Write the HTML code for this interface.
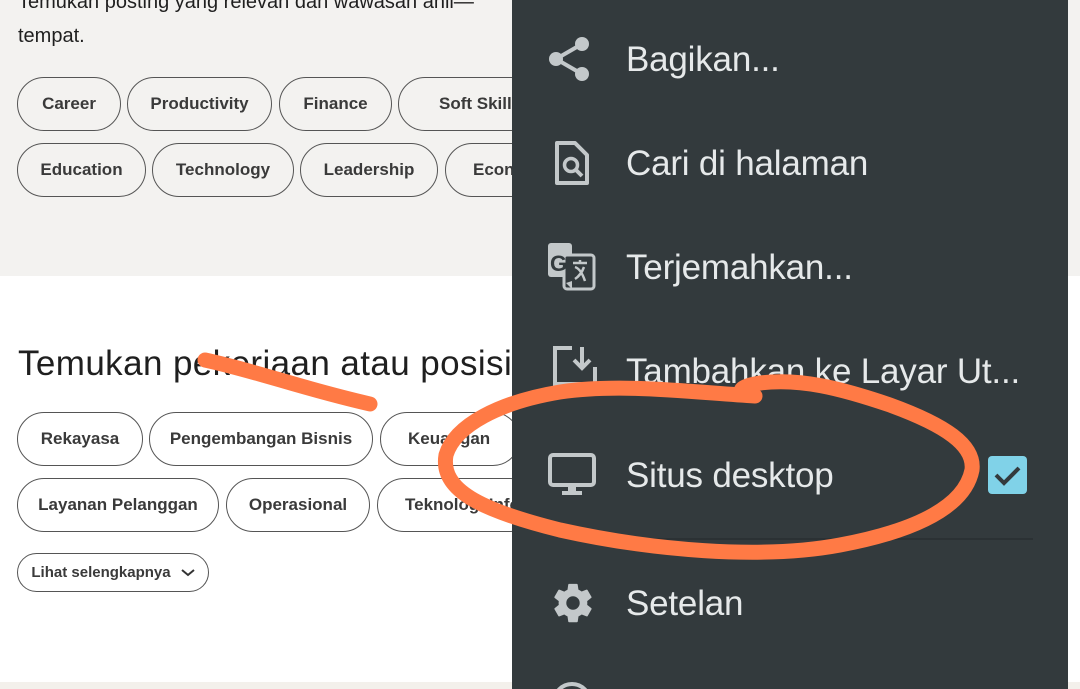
<!DOCTYPE html>
<html style="overflow:hidden;width:1080px;height:689px"><head><meta charset="utf-8"><style>
*{margin:0;padding:0;box-sizing:border-box}
body{width:1080px;height:689px;overflow:hidden;position:relative;background:#fff;font-family:"Liberation Sans",sans-serif}
.top{position:absolute;left:0;top:0;width:1080px;height:276px;background:#f3f2f0}
.bot{position:absolute;left:0;top:682px;width:1080px;height:7px;background:#f3f0eb}
.t{position:absolute;color:#1f1f1f;white-space:nowrap}
.chip{position:absolute;height:54px;border:1.3px solid #555;border-radius:27px;font-size:17px;font-weight:bold;color:#3a3a3a;display:flex;align-items:center;justify-content:center;white-space:nowrap;background:transparent;overflow:hidden}
.menu{position:absolute;left:512px;top:0;width:556px;height:689px;background:#333a3d;overflow:hidden}
.mi{position:absolute;left:114px;font-size:35px;color:#e6e9ea;white-space:nowrap;letter-spacing:-0.2px}
.ic{position:absolute;left:36px}
</style></head><body>
<div class="top"></div>
<div class="bot"></div>
<div class="t" style="left:18px;top:-9px;font-size:20px">Temukan posting yang relevan dan wawasan ahli—</div>
<div class="t" style="left:18px;top:25px;font-size:20px">tempat.</div>
<div class="chip" style="left:17px;top:77px;width:104px">Career</div>
<div class="chip" style="left:127px;top:77px;width:145px">Productivity</div>
<div class="chip" style="left:279px;top:77px;width:113px">Finance</div>
<div class="chip" style="left:398px;top:77px;width:140px;justify-content:flex-start;padding-left:40px">Soft Skills</div>
<div class="chip" style="left:17px;top:143px;width:129px">Education</div>
<div class="chip" style="left:152px;top:143px;width:142px">Technology</div>
<div class="chip" style="left:300px;top:143px;width:138px">Leadership</div>
<div class="chip" style="left:445px;top:143px;width:100px;justify-content:flex-start;padding-left:27px">Economy</div>
<div class="t" style="left:18px;top:344px;font-size:35px;letter-spacing:0.4px">Temukan pekerjaan atau posisi</div>
<div class="chip" style="left:17px;top:412px;width:126px">Rekayasa</div>
<div class="chip" style="left:149px;top:412px;width:224px">Pengembangan Bisnis</div>
<div class="chip" style="left:380px;top:412px;width:140px;justify-content:flex-start;padding-left:27px">Keuangan</div>
<div class="chip" style="left:17px;top:478px;width:202px">Layanan Pelanggan</div>
<div class="chip" style="left:226px;top:478px;width:144px">Operasional</div>
<div class="chip" style="left:377px;top:478px;width:160px;justify-content:flex-start;padding-left:27px">Teknologi Informasi</div>
<div class="chip" style="left:17px;top:553px;width:192px;height:39px;font-size:15px;gap:10px">Lihat selengkapnya <svg width="14" height="8" viewBox="0 0 14 8"><path d="M1 1l6 5 6-5" fill="none" stroke="#333" stroke-width="2"/></svg></div>

<div class="menu">
 <svg class="ic" style="top:36px" width="44" height="46" viewBox="0 0 44 46"><circle cx="34" cy="8" r="7" fill="#c3c8ca"/><circle cx="8" cy="23" r="7" fill="#c3c8ca"/><circle cx="34" cy="38" r="7" fill="#c3c8ca"/><path d="M34 8L8 23L34 38" fill="none" stroke="#c3c8ca" stroke-width="4"/></svg>
 <div class="mi" style="top:40px">Bagikan...</div>
 <svg class="ic" style="top:140px;left:42px" width="36" height="46" viewBox="0 0 36 46"><path d="M3 3h18l12 12v28H3z" fill="none" stroke="#c3c8ca" stroke-width="4" stroke-linejoin="round"/><circle cx="17" cy="25" r="6.5" fill="none" stroke="#c3c8ca" stroke-width="3.5"/><path d="M21.5 29.5L28 36" stroke="#c3c8ca" stroke-width="4"/></svg>
 <div class="mi" style="top:144px">Cari di halaman</div>
 <svg class="ic" style="top:243px" width="48" height="48" viewBox="0 0 48 48"><rect x="0" y="0" width="24" height="34" rx="3" fill="#c3c8ca"/><rect x="16" y="12" width="30" height="34" rx="3" fill="#333a3d" stroke="#c3c8ca" stroke-width="3"/><path d="M18 40l6 6v-8z" fill="#c3c8ca"/><text x="2" y="28" font-size="22" font-weight="bold" fill="#333a3d" font-family="Liberation Sans">G</text><path d="M25 20h14M32 17v4M27 24q6 2 10 14M36 24q-3 8-9 12" stroke="#c3c8ca" stroke-width="2.5" fill="none"/></svg>
 <div class="mi" style="top:248px">Terjemahkan...</div>
 <svg class="ic" style="top:345px;left:40px" width="46" height="44" viewBox="0 0 46 44"><path d="M20 3H3v36h40V22" fill="none" stroke="#c3c8ca" stroke-width="4"/><path d="M30 2v20M22 15l8 8 8-8" fill="none" stroke="#c3c8ca" stroke-width="4"/></svg>
 <div class="mi" style="top:352px">Tambahkan ke Layar Ut...</div>
 <svg class="ic" style="top:453px" width="48" height="44" viewBox="0 0 48 44"><rect x="2" y="2" width="44" height="30" rx="3" fill="none" stroke="#c3c8ca" stroke-width="4"/><rect x="20" y="33" width="8" height="6" fill="#c3c8ca"/><rect x="14" y="38" width="20" height="4" fill="#c3c8ca"/></svg>
 <div class="mi" style="top:456px">Situs desktop</div>
 <div style="position:absolute;left:476px;top:456px;width:39px;height:38px;background:#80d2e8;border-radius:4px"><svg width="39" height="38" viewBox="0 0 39 38"><path d="M8 19l8 8 15-15" fill="none" stroke="#333a3d" stroke-width="4"/></svg></div>
 <div style="position:absolute;left:63px;top:538px;width:458px;height:2px;background:#2b3134"></div>
 <svg class="ic" style="top:580px;left:38px" width="46" height="46" viewBox="0 0 24 24"><path fill="#c3c8ca" d="M19.4 13c.04-.33.06-.66.06-1s-.02-.67-.06-1l2.1-1.650c.2-.15.25-.42.12-.64l-2-3.46c-.12-.22-.39-.3-.61-.22l-2.49 1c-.52-.4-1.080-.73-1.69-.98l-.38-2.65A.49.49 0 0 0 14 2h-4c-.25 0-.46.18-.49.42l-.38 2.65c-.61.25-1.17.59-1.69.98l-2.49-1c-.23-.09-.49 0-.61.22l-2 3.46c-.13.22-.07.49.12.64L4.57 11c-.04.33-.07.67-.07 1s.03.67.07 1l-2.11 1.65c-.19.15-.24.42-.12.64l2 3.46c.12.22.39.3.61.22l2.49-1c.52.4 1.08.73 1.69.98l.38 2.65c.03.24.24.42.49.42h4c.25 0 .46-.18.49-.42l.38-2.65c.61-.25 1.17-.59 1.690-.98l2.49 1c.23.09.49 0 .61-.22l2-3.46c.12-.22.07-.49-.12-.64L19.4 13zM12 15.5A3.5 3.5 0 1 1 12 8.5a3.5 3.5 0 0 1 0 7z"/></svg>
 <div class="mi" style="top:584px">Setelan</div>
 <div style="position:absolute;left:40px;top:682px;width:40px;height:40px;border:4px solid #c3c8ca;border-radius:50%"></div>
</div>
<div style="position:absolute;left:1068px;top:0;width:12px;height:210px;background:#f3f2f0"></div>

<svg style="position:absolute;left:0;top:0" width="1080" height="689" viewBox="0 0 1080 689">
<g fill="none" stroke="#ff7a45" stroke-width="15" stroke-linecap="round" stroke-linejoin="round">
<path d="M205 360 C260 372 300 388 370 404"/>
<path d="M755 396 C690 392 620 383 560 392 C500 402 455 425 446 455 C440 490 480 510 560 530 C650 550 760 560 840 545 C920 530 965 505 972 470 C975 445 945 425 890 405 C840 388 800 378 760 383 C740 386 735 392 750 395"/>
</g></svg>
</body></html>
